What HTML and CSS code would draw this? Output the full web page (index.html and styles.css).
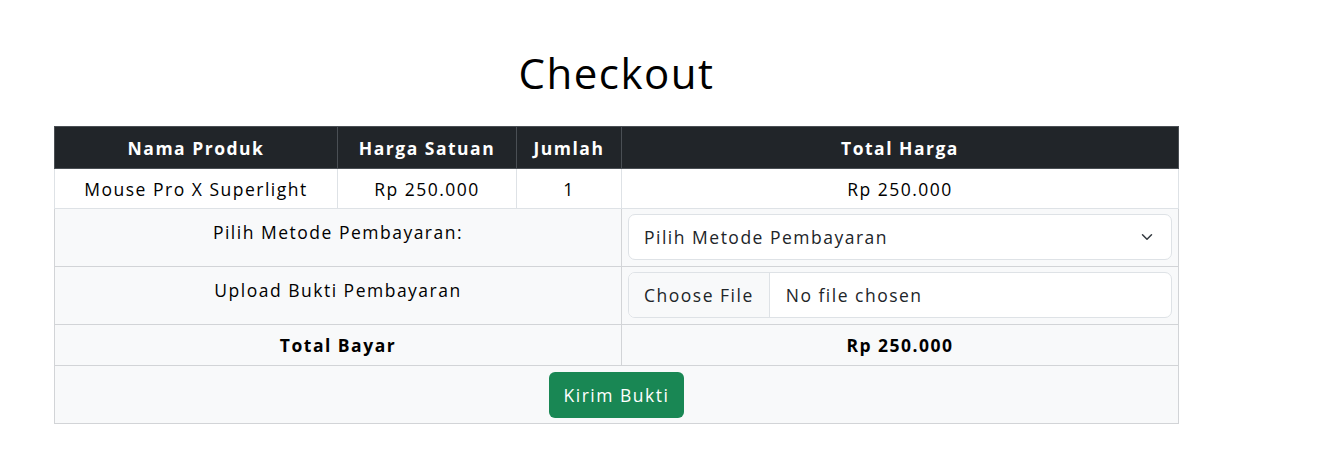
FILE: index.html
```html
<!DOCTYPE html>
<html lang="id">
<head>
<meta charset="utf-8">
<title>Checkout</title>
<link rel="stylesheet" href="styles.css">
</head>
<body>
<main class="container">
  <h1 class="title">Checkout</h1>
  <table class="checkout">
    <colgroup>
      <col class="c-name">
      <col class="c-price">
      <col class="c-qty">
      <col class="c-total">
    </colgroup>
    <thead>
      <tr>
        <th>Nama Produk</th>
        <th>Harga Satuan</th>
        <th>Jumlah</th>
        <th>Total Harga</th>
      </tr>
    </thead>
    <tbody>
      <tr class="item">
        <td>Mouse Pro X Superlight</td>
        <td>Rp 250.000</td>
        <td>1</td>
        <td>Rp 250.000</td>
      </tr>
      <tr class="field">
        <td colspan="3" class="label">Pilih Metode Pembayaran:</td>
        <td class="control">
          <div class="select-wrap">
            <select class="select">
              <option>Pilih Metode Pembayaran</option>
              <option>Transfer Bank</option>
              <option>E-Wallet</option>
            </select>
            <svg class="chevron" viewBox="0 0 16 16" width="12" height="12" aria-hidden="true"><path d="M2 5l6 6 6-6" fill="none" stroke="#343a40" stroke-width="2" stroke-linecap="round" stroke-linejoin="round"/></svg>
          </div>
        </td>
      </tr>
      <tr class="field">
        <td colspan="3" class="label">Upload Bukti Pembayaran</td>
        <td class="control">
          <input type="file" class="file">
        </td>
      </tr>
      <tr class="sum">
        <td colspan="3">Total Bayar</td>
        <td>Rp 250.000</td>
      </tr>
      <tr class="actions">
        <td colspan="4"><button type="submit" class="btn">Kirim Bukti</button></td>
      </tr>
    </tbody>
  </table>
</main>
</body>
</html>
```
FILE: styles.css
```css
* { box-sizing: border-box; }
html, body { margin: 0; padding: 0; background: #fff; }
body {
  font-family: "Open Sans", "Liberation Sans", sans-serif;
  font-size: 17.5px;
  font-weight: 500;
  letter-spacing: 1.5px;
  color: #000;
}
.container {
  width: 1125px;
  margin: 0 0 0 54px;
  padding-top: 45px;
}
.title {
  margin: 0 0 25px;
  text-align: center;
  font-size: 42px;
  font-weight: 500;
  letter-spacing: 1.5px;
  line-height: 56px;
}
.checkout {
  width: 1124px;
  border-collapse: collapse;
  table-layout: fixed;
  text-align: center;
}
.c-name { width: 283px; }
.c-price { width: 179px; }
.c-qty { width: 105px; }
.c-total { width: 557px; }

.checkout th {
  background: #212529;
  color: #fff;
  font-weight: 700;
  height: 42px;
  padding: 0 4px;
  border: 1px solid #4a4f54;
  line-height: 24px;
}
.checkout td {
  border: 1px solid #dee2e6;
  padding: 0 6px;
  line-height: 24px;
  vertical-align: middle;
}
.item td { height: 40px; background: #fff; }
.field td, .sum td, .actions td { background: #f8f9fa; border-color: #d2d4d7; }
.field td { height: 58px; }
.field .label { vertical-align: top; padding-top: 11px; }
.field .control { padding: 5px 6px 6px; }
.sum td { height: 41px; font-weight: 700; }
.actions td { height: 58px; padding: 5px 6px; }

.select-wrap { position: relative; }
.select {
  display: block;
  width: 100%;
  height: 46px;
  appearance: none;
  -webkit-appearance: none;
  border: 1px solid #dee2e6;
  border-radius: 7px;
  background: #fff;
  padding: 0 40px 0 15px;
  font: inherit;
  letter-spacing: inherit;
  color: #212529;
}
.chevron {
  position: absolute;
  right: 19px;
  top: 17px;
  width: 12px;
  height: 12px;
  pointer-events: none;
}
.file {
  display: block;
  width: 100%;
  height: 46px;
  border: 1px solid #dee2e6;
  border-radius: 7px;
  background: #fff;
  font: inherit;
  letter-spacing: inherit;
  color: #212529;
  padding: 0;
  overflow: hidden;
}
.file::file-selector-button {
  height: 44px;
  margin: 0 16px 0 0;
  padding: 0 15px;
  border: 0;
  border-right: 1px solid #dee2e6;
  border-radius: 0;
  background: #f8f9fa;
  color: #212529;
  font: inherit;
  letter-spacing: inherit;
}
.btn {
  display: inline-block;
  width: 135px;
  height: 46px;
  border: 0;
  border-radius: 6px;
  background: #198754;
  color: #fff;
  font: inherit;
  letter-spacing: inherit;
  cursor: pointer;
}
```
